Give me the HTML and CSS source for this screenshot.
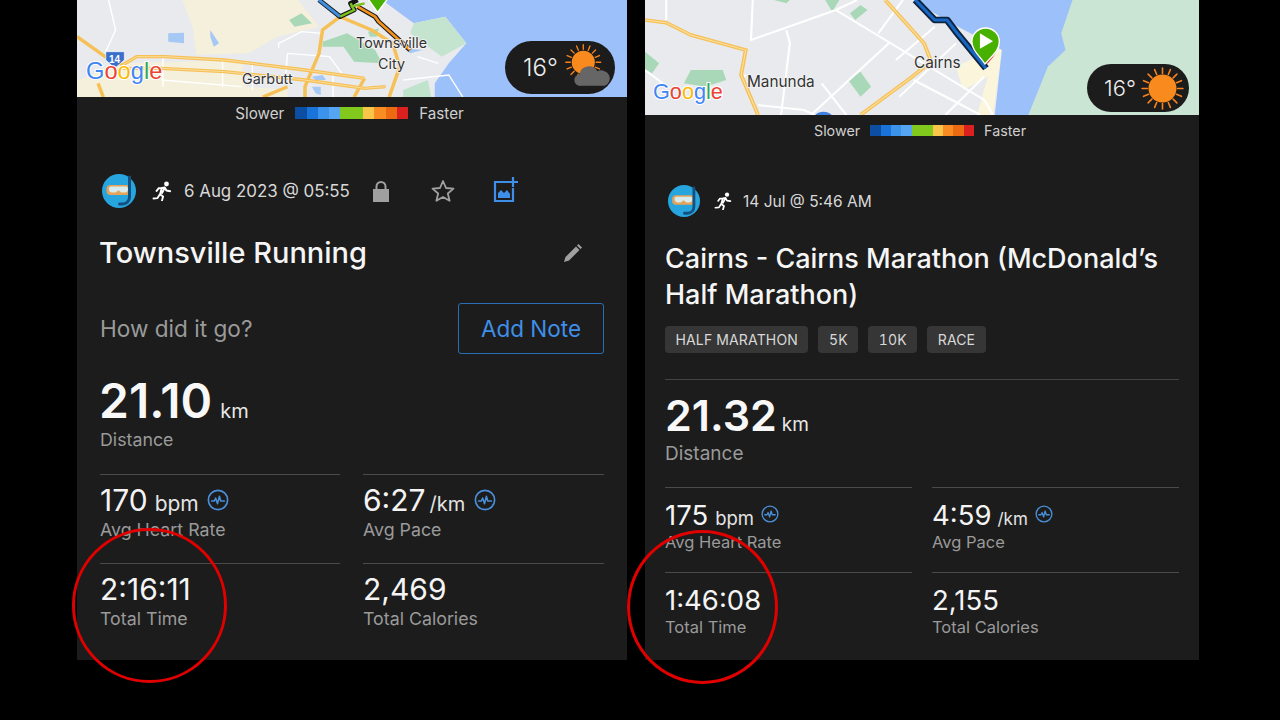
FILE: index.html
```html
<!DOCTYPE html>
<html lang="en">
<head>
<meta charset="utf-8">
<title>Activity comparison</title>
<link rel="stylesheet" href="styles.css">
</head>
<body>
<svg class="defs" width="0" height="0" aria-hidden="true">
  <defs>
    <symbol id="runner" viewBox="0 0 20 20">
      <circle cx="14.500" cy="3" r="2.400" fill="#fff"/>
      <path d="M1.500 17.500l4-.4 2.400-3.800 3.200 2.200-1.100 4M8 13.300l1.900-6.300-3.300.3-2 2.600M9.900 7l2.900-.5 1.600 3 3.800.7M10 12l1.900-3.500" fill="none" stroke="#fff" stroke-width="1.900" stroke-linecap="round" stroke-linejoin="round"/>
    </symbol>
    <symbol id="snorkel" viewBox="0 0 34 34">
      <circle cx="17" cy="17" r="17" fill="#27a5df"/>
      <rect x="4.500" y="11" width="24" height="10" rx="4" fill="#e8a35a"/>
      <path d="M7 15c0-2 1-2.500 3-2.500h13c2 0 3 .5 3 2.500 0 2-1 3.500-3 3.500h-3c-2 0-2-2-3.500-2S15 18.500 13 18.500h-3c-2 0-3-1.500-3-3.500Z" fill="#d6ecef"/>
      <path d="M27.500 3v20c0 4-3 7-7 7h-3" fill="none" stroke="#14507f" stroke-width="3" stroke-linecap="round"/>
    </symbol>
    <symbol id="pulse" viewBox="0 0 24 24">
      <circle cx="12" cy="12" r="10.500" fill="none" stroke="#4a90d9" stroke-width="1.800"/>
      <path d="M5 13h3l1.500-3 2 6 2-8 1.500 5H19" fill="none" stroke="#4a90d9" stroke-width="1.700" stroke-linejoin="round" stroke-linecap="round"/>
    </symbol>
    <symbol id="sun-rays" viewBox="0 0 40 40">
      <g stroke="#f5821f" stroke-width="1.500" stroke-linecap="round">
        <path d="M20 1v5M20 34v5M1 20h5M34 20h5M6.600 6.600l3.500 3.500M29.900 29.900l3.500 3.500M6.600 33.400l3.500-3.500M29.900 10.100l3.500-3.500M12.700 2.400l1.900 4.600M25.400 33l1.900 4.600M2.400 27.300l4.600-1.900M33 14.600l4.600-1.900M2.400 12.700l4.600 1.900M33 25.400l4.600 1.900M12.700 37.600l1.900-4.600M25.400 7l1.900-4.600"/>
      </g>
    </symbol>
  </defs>
</svg>

<main class="stage">
  <section class="panel panel-a">
    <div class="map">
      <svg class="map-art" viewBox="0 0 1650 291" role="img" aria-label="Map of Townsville">
        <rect width="1650" height="291" fill="#e8eaed"/>
        <g transform="scale(1.0523 1)">
          <path d="M300 0H630L690 80 570 110 490 160 340 165 330 80ZM130 190L470 180 480 260 600 270 600 291H0V240Z" fill="#f5f0dc"/>
          <path d="M870 0H1568V291H1020V250L1060 190 1110 130 1050 50 960 70Z" fill="#9cc0f9"/>
          <path d="M1050 50L1110 130 1040 170 950 100 960 70Z" fill="#c5e4d0"/>
          <path d="M930 270L1000 240 1010 291H930Z" fill="#bfe3cb"/>
          <path d="M700 125L770 100 850 150 870 190 790 185 760 140 700 140ZM605 60L640 40 670 70 620 80ZM830 95L860 85 855 110 835 110Z" fill="#a9d8b8"/>
          <path d="M260 100L305 98V130L260 125ZM380 90L405 130 390 140 380 110ZM670 230L700 225 710 240 680 240ZM670 260H695V285L680 280ZM930 145L985 150 950 160Z" fill="#a6c8f4"/>
          <g fill="none" stroke="#fff" stroke-width="4">
            <path d="M90 0L110 90 80 160M575 145V130L640 95 700 100M600 160L720 170 755 220M600 160L595 230M415 175V260M500 190V270M245 170V260M240 240L470 260M970 170L1030 190M930 240L1060 225 1100 291M730 225V291"/>
          </g>
          <g fill="none" stroke="#f6c056" stroke-width="10">
            <path d="M0 110L80 170 130 195M60 250L75 291M750 50L700 90 690 160 650 260V291M750 50L840 90 900 130 920 200 890 291M820 235L790 291M600 260L530 291"/>
            <path d="M130 195L170 170 250 170 420 180 650 210 820 235M130 205L240 205 420 215 650 240 820 265 880 260"/>
          </g>
          <g fill="none" stroke="#fbe2a8" stroke-width="2.500">
            <path d="M130 195L170 170 250 170 420 180 650 210 820 235M130 205L240 205 420 215 650 240 820 265 880 260"/>
          </g>
          <path d="M690 0L750 50 790 30 780 10 800 0M800 20L850 50 860 65 950 150" fill="none" stroke="#151515" stroke-width="14" stroke-linejoin="round"/>
          <path d="M690 0L750 50" fill="none" stroke="#3f8fe0" stroke-width="9"/>
          <path d="M750 50L790 30 780 10M780 20L820 10" fill="none" stroke="#7bc11c" stroke-width="7"/>
          <path d="M800 20L850 50 860 65 950 150" fill="none" stroke="#f5921e" stroke-width="8"/>
          <path d="M825 -10H890L857 37Z" fill="#47b000" stroke="#fff" stroke-width="4"/>
          <path d="M82 155H135V180L108 205 82 180Z" fill="#3a70c9" stroke="#fff" stroke-width="2"/>
        </g>
        <text x="96" y="190" class="shield">14</text>
        <text x="837" y="143" class="place">Townsville</text>
        <text x="903" y="206" class="place">City</text>
        <text x="495" y="252" class="place">Garbutt</text>
        <text x="27" y="237" class="logo logo-a"><tspan fill="#4285f4">G</tspan><tspan fill="#ea4335">o</tspan><tspan fill="#fbbc05">o</tspan><tspan fill="#4285f4">g</tspan><tspan fill="#34a853">l</tspan><tspan fill="#ea4335">e</tspan></text>
      </svg>
      <div class="weather">
        <span class="temp">16°</span>
        <svg class="weather-icon" viewBox="0 0 40 40" aria-hidden="true">
          <use href="#sun-rays" x="-2" y="-3" width="35" height="35"/>
          <circle cx="15.500" cy="14.500" r="11" fill="#f98a1e"/>
          <path d="M13 37a5.500 5.500 0 0 1-1-11 9 8.500 0 0 1 17-3 7.500 7 0 0 1 7 14Z" fill="#666"/>
        </svg>
      </div>
    </div>
    <div class="legend">
      <span>Slower</span>
      <div class="scale"><i class="c1"></i><i class="c2"></i><i class="c3"></i><i class="c4"></i><i class="c5"></i><i class="c5"></i><i class="c6"></i><i class="c7"></i><i class="c8"></i><i class="c9"></i></div>
      <span>Faster</span>
    </div>
    <div class="meta">
      <svg class="avatar" aria-hidden="true"><use href="#snorkel"/></svg>
      <svg class="runner" aria-hidden="true"><use href="#runner"/></svg>
      <span class="date">6 Aug 2023 @ 05:55</span>
      <svg class="tool lock" viewBox="0 0 18 22" aria-hidden="true"><path d="M4.500 10V6.500a4.500 4.500 0 0 1 9 0V10" fill="none" stroke="#a0a0a0" stroke-width="2"/><rect x="1" y="9" width="16" height="13" fill="#a0a0a0"/></svg>
      <svg class="tool star" viewBox="0 0 24 24" aria-hidden="true"><path d="M12 2l3 7 7.500.6-5.700 4.900 1.800 7.300L12 18l-6.600 3.800 1.800-7.300L1.500 9.600 9 9Z" fill="none" stroke="#a0a0a0" stroke-width="1.800" stroke-linejoin="round"/></svg>
      <svg class="tool photo" viewBox="0 0 26 26" aria-hidden="true"><path d="M15 5H2v19h18V11" fill="none" stroke="#3f8fe8" stroke-width="2.200"/><path d="M5 21v-5l3-3 3 3 3-3 3 4v4Z" fill="#3f8fe8"/><path d="M20 0v10M15 5h10" stroke="#3f8fe8" stroke-width="2.200"/></svg>
    </div>
    <div class="title-row">
      <h1>Townsville Running</h1>
      <svg class="pencil" viewBox="0 0 20 20" aria-hidden="true"><path d="M1 19l1.500-5L13 3.500l3.500 3.500L6 17.500ZM14 2.500l1.500-1.500 3.500 3.500L17.500 6Z" fill="#a0a0a0"/></svg>
    </div>
    <div class="note-row">
      <span class="prompt">How did it go?</span>
      <span class="add-note">Add Note</span>
    </div>
    <div class="hero">
      <div class="value"><strong>21.10</strong><small>km</small></div>
      <div class="caption">Distance</div>
    </div>
    <div class="stats">
      <div class="stat"><div class="stat-value">170<small>bpm</small><svg class="pulse" aria-hidden="true"><use href="#pulse"/></svg></div><div class="caption">Avg Heart Rate</div></div>
      <div class="stat"><div class="stat-value">6:27<small class="per">/km</small><svg class="pulse" aria-hidden="true"><use href="#pulse"/></svg></div><div class="caption">Avg Pace</div></div>
      <div class="stat"><div class="stat-value">2:16:11</div><div class="caption">Total Time</div></div>
      <div class="stat"><div class="stat-value">2,469</div><div class="caption">Total Calories</div></div>
    </div>
    <div class="ring"></div>
  </section>

  <section class="panel panel-b">
    <div class="map">
      <svg class="map-art" viewBox="0 0 1662 345" role="img" aria-label="Map of Cairns">
        <rect width="1662" height="345" fill="#e8eaed"/>
        <g transform="scale(1.06 1)">
          <path d="M880 200L1000 140 1010 150 985 345H940L970 230 900 270Z" fill="#fbf5dc"/>
          <path d="M760 0L850 60 1010 150 990 345H1095L1150 195 1200 150 1190 100 1220 0Z" fill="#9cc0f9"/>
          <path d="M1210 0L1178 100 1190 150 1140 200 1085 345H1568V0Z" fill="#cbe5d4"/>
          <path d="M590 230L610 215 640 260 610 290 575 240ZM110 250L130 210 220 210 230 240 170 260ZM510 0H550L530 35ZM580 40L610 15 630 30 595 60ZM365 0H410L400 10ZM0 155L40 190 20 220 0 210Z" fill="#a9d8b8"/>
          <g fill="none" stroke="#fff" stroke-width="6">
            <path d="M60 0V60M305 0L300 120 540 30 600 0M540 30L960 300 985 345M400 90L410 130 385 345M730 0L660 100M690 130L470 345M820 80L710 180M880 130L720 290M960 230L850 345M760 240L950 345M320 315L450 330 480 345M500 250L570 345M0 210L50 250M285 225L272 235"/>
          </g>
          <g fill="none" stroke="#f6c056" stroke-width="11">
            <path d="M0 60L60 68 130 105 285 150 272 225 320 345M680 0L790 130 810 185 750 235 610 345"/>
          </g>
          <g fill="none" stroke="#fbe2a8" stroke-width="3">
            <path d="M0 60L60 68 130 105 285 150 272 225 320 345M680 0L790 130 810 185 750 235 610 345"/>
          </g>
          <circle cx="505" cy="368" r="33" fill="#3f7fe0"/>
          <path d="M765 0L820 60 855 60 880 95 965 205" fill="none" stroke="#10243f" stroke-width="20" stroke-linejoin="round"/>
          <path d="M765 0L820 60 855 60 880 95 965 205" fill="none" stroke="#1767c4" stroke-width="9" stroke-linejoin="round"/>
          <path d="M1000 110C1008 130 990 165 968 190" fill="none" stroke="#e03030" stroke-width="4"/>
          <path d="M962 192C945 165 925 150 925 125A38 40 0 0 1 1003 125C1003 150 985 165 962 192Z" fill="#47b000" stroke="#fff" stroke-width="4"/>
          <path d="M948 100L985 124 948 146Z" fill="#fff"/>
        </g>
        <text x="807" y="203" class="place place-b">Cairns</text>
        <text x="306" y="262" class="place place-b">Manunda</text>
        <text x="24" y="297" class="logo logo-b"><tspan fill="#4285f4">G</tspan><tspan fill="#ea4335">o</tspan><tspan fill="#fbbc05">o</tspan><tspan fill="#4285f4">g</tspan><tspan fill="#34a853">l</tspan><tspan fill="#ea4335">e</tspan></text>
      </svg>
      <div class="weather">
        <span class="temp">16°</span>
        <svg class="weather-icon" viewBox="0 0 40 40" aria-hidden="true">
          <use href="#sun-rays"/>
          <circle cx="20" cy="20" r="13" fill="#f98a1e"/>
        </svg>
      </div>
    </div>
    <div class="legend">
      <span>Slower</span>
      <div class="scale"><i class="c1"></i><i class="c2"></i><i class="c3"></i><i class="c4"></i><i class="c5"></i><i class="c5"></i><i class="c6"></i><i class="c7"></i><i class="c8"></i><i class="c9"></i></div>
      <span>Faster</span>
    </div>
    <div class="meta">
      <svg class="avatar" aria-hidden="true"><use href="#snorkel"/></svg>
      <svg class="runner" aria-hidden="true"><use href="#runner"/></svg>
      <span class="date">14 Jul @ 5:46 AM</span>
    </div>
    <div class="title-row">
      <h1>Cairns - Cairns Marathon (McDonald’s Half Marathon)</h1>
    </div>
    <div class="tags">
      <span class="tag">HALF MARATHON</span><span class="tag">5K</span><span class="tag">10K</span><span class="tag">RACE</span>
    </div>
    <div class="hero">
      <div class="value"><strong>21.32</strong><small>km</small></div>
      <div class="caption">Distance</div>
    </div>
    <div class="stats">
      <div class="stat"><div class="stat-value">175<small>bpm</small><svg class="pulse" aria-hidden="true"><use href="#pulse"/></svg></div><div class="caption">Avg Heart Rate</div></div>
      <div class="stat"><div class="stat-value">4:59<small class="per">/km</small><svg class="pulse" aria-hidden="true"><use href="#pulse"/></svg></div><div class="caption">Avg Pace</div></div>
      <div class="stat"><div class="stat-value">1:46:08</div><div class="caption">Total Time</div></div>
      <div class="stat"><div class="stat-value">2,155</div><div class="caption">Total Calories</div></div>
    </div>
    <div class="ring"></div>
  </section>
</main>
</body>
</html>
```
FILE: styles.css
```css
* { box-sizing: border-box; }
html, body { margin: 0; height: 720px; overflow: hidden; background: #000; }
body { font-family: Inter, "Liberation Sans", sans-serif; color: #f2f2f2; }
.defs { position: absolute; }
.stage { display: flex; gap: 18px; padding-left: 77px; align-items: flex-start; }
.panel { position: relative; height: 660px; background: #1c1c1c; flex: none; }
.panel-a { width: 550px; }
.panel-b { width: 554px; }

.map { position: relative; overflow: hidden; }
.panel-a .map { height: 97px; }
.panel-b .map { height: 115px; }
.map-art { display: block; width: 100%; height: 100%; }
.place { font-family: Inter, sans-serif; font-size: 43px; fill: #333; paint-order: stroke; stroke: #f4f4f4; stroke-width: 5px; }
.place-b { font-size: 46px; }
.logo { font-family: "Liberation Sans", sans-serif; paint-order: stroke; stroke: #fff; stroke-width: 6px; }
.logo-a { font-size: 71px; }
.logo-b { font-size: 65px; }
.shield { font-family: "Liberation Sans", sans-serif; font-size: 30px; font-weight: 700; fill: #fff; }

.weather { position: absolute; display: flex; align-items: center; background: #1c1c1c; color: #eee; border-radius: 27px; }
.panel-a .weather { left: 428px; top: 41px; width: 110px; height: 53px; padding-left: 18px; gap: 9px; }
.panel-b .weather { left: 442px; top: 64px; width: 102px; height: 48px; padding-left: 17px; gap: 5px; }
.temp { font-size: 24px; font-weight: 300; }
.panel-b .temp { font-size: 22px; }
.weather-icon { width: 42px; height: 42px; overflow: visible; }
.panel-b .weather-icon { width: 43px; height: 43px; }

.legend { display: flex; justify-content: center; align-items: center; color: #d0d0d0; margin-left: -4px; }
.panel-a .legend { height: 32px; gap: 11px; font-size: 15.200px; margin-left: -5px; }
.panel-b .legend { height: 30px; gap: 10px; font-size: 14.300px; }
.scale { display: flex; height: 12px; }
.panel-a .scale { width: 113px; }
.panel-b .scale { width: 104px; height: 11px; }
.scale i { flex: 1; }
.c1 { background: #0b4ea2; } .c2 { background: #1a73d8; } .c3 { background: #3b93ec; } .c4 { background: #55a5f2; }
.c5 { background: #82c91e; } .c6 { background: #fbc54a; } .c7 { background: #f98c22; } .c8 { background: #eb6a12; } .c9 { background: #db2020; }

.meta { display: flex; align-items: center; }
.panel-a .meta { margin: 45px 0 0 25px; height: 34px; }
.panel-b .meta { margin: 40px 0 0 23px; height: 32px; }
.avatar { width: 34px; height: 34px; flex: none; }
.panel-b .avatar { width: 32px; height: 32px; }
.runner { width: 20px; height: 20px; margin-left: 16px; flex: none; }
.panel-b .runner { width: 18px; height: 18px; margin-left: 14px; }
.date { color: #d8d8d8; }
.panel-a .date { font-size: 16.900px; margin-left: 12px; }
.panel-b .date { font-size: 15.500px; margin-left: 11px; }
.tool { flex: none; }
.lock { width: 18px; height: 22px; margin-left: 22px; }
.star { width: 24px; height: 24px; margin-left: 41px; }
.photo { width: 26px; height: 26px; margin-left: 38px; margin-top: -3px; }

.title-row { display: flex; justify-content: space-between; align-items: center; }
h1 { margin: 0; font-weight: 500; color: #f5f5f5; }
.panel-a .title-row { margin: 26px 0 0 22px; padding-right: 44px; height: 38px; }
.panel-a h1 { font-size: 29px; line-height: 38px; }
.pencil { width: 20px; height: 20px; }
.panel-b .title-row { margin: 24px 20px 0 20px; }
.panel-b h1 { font-size: 27px; line-height: 36px; }

.note-row { display: flex; justify-content: space-between; align-items: center; margin: 31px 23px 0; height: 51px; }
.prompt { font-size: 22.600px; color: #9a9a9a; }
.add-note { width: 146px; height: 51px; display: flex; align-items: center; justify-content: center; border: 1.500px solid #2a6cb5; border-radius: 3px; color: #3f8fe8; font-size: 22.500px; }

.tags { display: flex; gap: 10px; margin: 13px 20px 0 20px; padding-bottom: 26px; border-bottom: 1px solid #444; }
.tag { height: 27px; padding: 0 10.500px; display: flex; align-items: center; background: #363636; color: #d8d8d8; border-radius: 4px; font-size: 14px; letter-spacing: .15px; font-variant-numeric: tabular-nums; }

.value { display: flex; align-items: baseline; }
.value strong { font-weight: 600; color: #f8f8f8; }
.value small { color: #e8e8e8; }
.panel-a .hero { margin: 17px 23px 0 22px; height: 103px; }
.panel-a .value { height: 58px; }
.panel-a .value strong { font-size: 48px; line-height: 60px; }
.panel-a .value small { font-size: 20px; margin-left: 8px; }
.panel-a .hero .caption { margin-left: 1px; }
.panel-b .hero { margin: 6px 20px 0; height: 101px; }
.panel-b .value { height: 57px; }
.panel-b .value strong { font-size: 43px; line-height: 58px; }
.panel-b .value small { font-size: 19px; margin-left: 5px; }

.caption { color: #9a9a9a; }
.panel-a .caption { font-size: 17.800px; line-height: 22px; }
.panel-b .caption { font-size: 16.500px; line-height: 22px; }
.panel-b .hero .caption { font-size: 19px; }

.stats { display: grid; }
.panel-a .stats { grid-template-columns: 240px 241px; column-gap: 23px; margin: 0 23px; }
.panel-b .stats { grid-template-columns: 247px 247px; column-gap: 20px; margin: 0 20px; }
.stat { border-top: 1px solid #4a4a4a; }
.panel-a .stat { height: 89px; padding-top: 7px; }
.panel-b .stat { height: 85px; padding-top: 8.500px; }
.stat-value { display: flex; align-items: baseline; font-weight: 400; color: #f4f4f4; }
.panel-a .stat-value { font-size: 30px; line-height: 36px; height: 36.500px; }
.panel-b .stat-value { font-size: 27.500px; line-height: 36px; height: 34px; }
.stat-value small { margin-left: 8px; color: #e4e4e4; }
.panel-a .stat-value small { font-size: 21px; margin-left: 7px; }
.panel-a .stat-value .per { font-size: 20px; margin-left: 4px; }
.panel-b .stat-value small { font-size: 18.500px; margin-left: 7px; }
.panel-b .stat-value .per { font-size: 17px; margin-left: 6px; }
.pulse { align-self: flex-start; flex: none; width: 22px; height: 22px; margin-left: 8px; margin-top: 7px; }
.panel-a .per + .pulse { margin-left: 9px; }
.panel-b .pulse { width: 18px; height: 18px; margin-left: 7px; margin-top: 8px; }

.ring { position: absolute; border: 3px solid #e00000; border-radius: 50%; }
.panel-a .ring { left: -5px; top: 528px; width: 155px; height: 155px; }
.panel-b .ring { left: -18px; top: 530px; width: 151px; height: 154px; }
```
